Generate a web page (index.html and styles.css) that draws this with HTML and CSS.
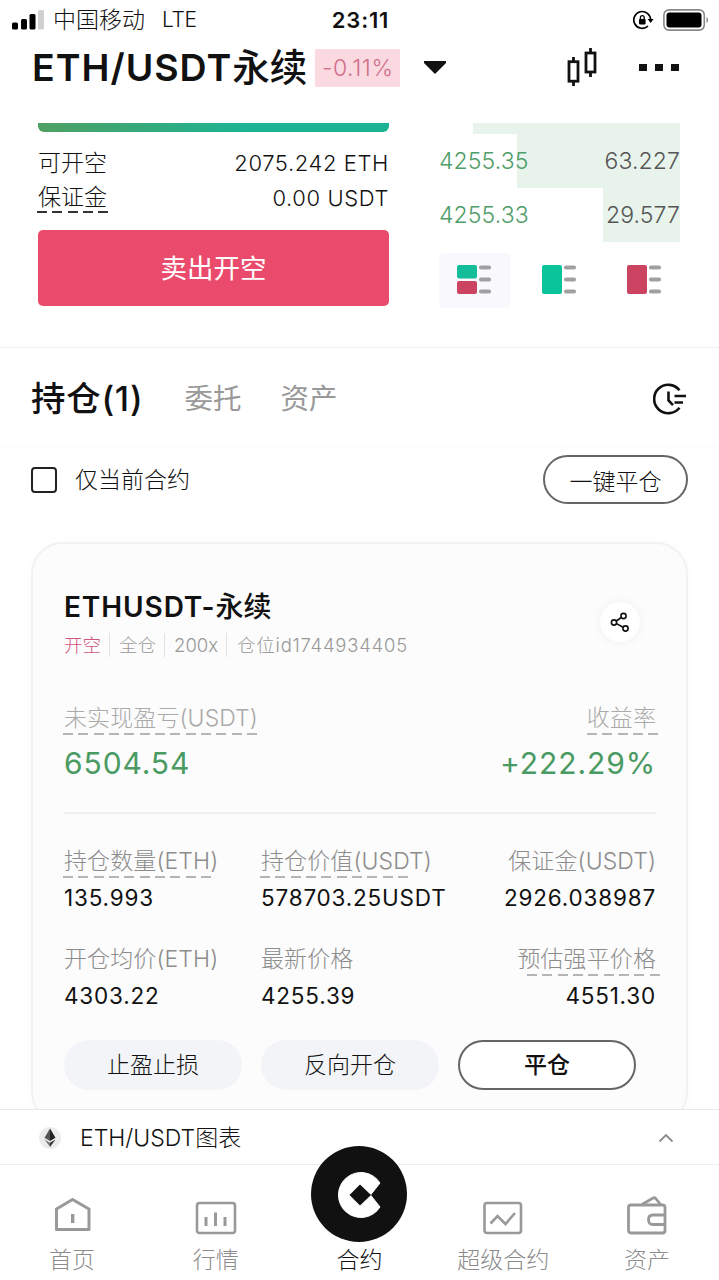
FILE: index.html
```html
<!DOCTYPE html>
<html lang="zh-CN">
<head>
    <meta charset="UTF-8">
    <meta name="viewport" content="width=device-width, initial-scale=1.0">
    <title>ETH/USDT永续</title>
    <link rel="stylesheet" href="styles.css">
</head>
<body>

    <div class="statusbar">
        <div class="carrier">
            <svg class="signal" width="32" height="20" viewBox="0 0 32 20">
                <rect x="0" y="12.5" width="6" height="7" rx="1.5" fill="#000"/>
                <rect x="9" y="9" width="6" height="10.5" rx="1.5" fill="#000"/>
                <rect x="17.5" y="4" width="6" height="15.5" rx="1.5" fill="#000"/>
                <rect x="26" y="0" width="6" height="19.5" rx="1.5" fill="#d0d0d0"/>
            </svg>
            <span class="operator">中国移动</span>
            <span class="network">LTE</span>
        </div>
        <span class="time">23:11</span>
        <div class="battery">
            <svg width="22" height="20" viewBox="0 0 22 20" fill="none">
                <path d="M17.6 10a8.4 8.4 0 1 0-2.6 6" stroke="#000" stroke-width="1.7"/>
                <path d="M14.6 9h6l-3 4z" fill="#000"/>
                <rect x="6" y="9" width="6.6" height="5.4" rx=".8" fill="#000"/>
                <path d="M7.4 9.5V7.6a1.9 1.9 0 0 1 3.8 0V9.5" stroke="#000" stroke-width="1.3"/>
            </svg>
            <svg width="46" height="22" viewBox="0 0 46 22" fill="none">
                <rect x=".9" y=".9" width="40.4" height="20.2" rx="5" stroke="#8a8a8a" stroke-width="1.6"/>
                <rect x="3.5" y="3.5" width="35" height="15" rx="3" fill="#000"/>
                <path d="M43.500 8v6c2-1 2-5 0-6z" fill="#888"/>
            </svg>
        </div>
    </div>

    <header class="topbar">
        <h1>ETH/USDT<span>永续</span></h1>
        <span class="change">-0.11%</span>
        <svg class="caret" width="24" height="15" viewBox="0 0 24 15"><path d="M1 1h22v2L12 14 1 3z" fill="#111"/></svg>
        <svg class="candles" width="32" height="40" viewBox="0 0 32 40" fill="none" stroke="#111" stroke-width="2.8">
            <path d="M6.500 9v5M6.500 33v5M23.500 0v5M23.500 24v5"/>
            <rect x="2" y="13.700" width="9" height="19.500"/>
            <rect x="19" y="5" width="9" height="19"/>
        </svg>
        <div class="more"><i></i><i></i><i></i></div>
    </header>

    <main>
        <section class="trade">
            <div class="order">
                <div class="buy-edge"></div>
                <div class="order-row">
                    <span>可开空</span>
                    <span class="amount">2075.242 ETH</span>
                </div>
                <div class="order-row margin-row">
                    <span class="dashed d5">保证金</span>
                    <span class="amount">0.00 USDT</span>
                </div>
                <button class="sell">卖出开空</button>
            </div>
            <div class="book">
                <div class="depth-edge"></div>
                <div class="book-row depth-68"><span class="price">4255.35</span><span>63.227</span></div>
                <div class="book-row depth-32"><span class="price">4255.33</span><span>29.577</span></div>
                <div class="book-modes">
                    <div class="mode active">
                        <svg width="36" height="32" viewBox="0 0 36 32">
                            <rect x="1" y="1" width="20" height="13.5" rx="2" fill="#13bd9a"/>
                            <rect x="1" y="17" width="20" height="13" rx="2" fill="#cb4360"/>
                            <path d="M25 3.500h8M25 15.500h8M25 27.500h8" stroke="#a0a0a0" stroke-width="4.2" stroke-linecap="round"/>
                        </svg>
                    </div>
                    <div class="mode">
                        <svg width="36" height="32" viewBox="0 0 36 32">
                            <rect x="1" y="1" width="20" height="29" rx="2" fill="#0ac49c"/>
                            <path d="M25 3.500h8M25 15.500h8M25 27.500h8" stroke="#a0a0a0" stroke-width="4.2" stroke-linecap="round"/>
                        </svg>
                    </div>
                    <div class="mode">
                        <svg width="36" height="32" viewBox="0 0 36 32">
                            <rect x="1" y="1" width="20" height="29" rx="2" fill="#cb4360"/>
                            <path d="M25 3.500h8M25 15.500h8M25 27.500h8" stroke="#a0a0a0" stroke-width="4.2" stroke-linecap="round"/>
                        </svg>
                    </div>
                </div>
            </div>
        </section>

        <nav class="tabs">
            <span class="tab current">持仓(1)</span>
            <span class="tab">委托</span>
            <span class="tab">资产</span>
            <svg class="history" width="34" height="32" viewBox="0 0 34 32" fill="none" stroke="#111" stroke-width="2.6">
                <path d="M26.500 7.200A14.200 14.200 0 1 0 26.500 24.800"/>
                <path d="M15.500 8.500v9l4.500 4.700M21.500 13H33M21.500 19.500h8.500"/>
            </svg>
        </nav>

        <div class="filter">
            <span class="checkbox"></span>
            <span class="filter-label">仅当前合约</span>
            <button class="close-all">一键平仓</button>
        </div>

        <section class="card">
            <div class="card-head">
                <div>
                    <h2>ETHUSDT-<span>永续</span></h2>
                    <div class="tags">
                        <span class="short">开空</span>
                        <span>全仓</span>
                        <span>200x</span>
                        <span class="pos-id">仓位id1744934405</span>
                    </div>
                </div>
                <div class="share">
                    <svg width="20" height="22" viewBox="0 0 20 22" fill="none" stroke="#111" stroke-width="1.6">
                        <circle cx="4" cy="11.5" r="2.6"/>
                        <circle cx="13.5" cy="5" r="2.6"/>
                        <circle cx="15.5" cy="17.5" r="2.6"/>
                        <path d="M6.300 10l5-3.500M6.500 12.600l6.600 3.700"/>
                    </svg>
                </div>
            </div>

            <div class="pnl">
                <div class="stat">
                    <span class="label dashed d13">未实现盈亏(USDT)</span>
                    <span class="big">6504.54</span>
                </div>
                <div class="stat right">
                    <span class="label dashed d5">收益率</span>
                    <span class="big rate">+222.29%</span>
                </div>
            </div>

            <div class="stats">
                <div class="stat">
                    <span class="label dashed d10">持仓数量(ETH)</span>
                    <span class="value">135.993</span>
                </div>
                <div class="stat">
                    <span class="label dashed d10">持仓价值(USDT)</span>
                    <span class="value">578703.25USDT</span>
                </div>
                <div class="stat right">
                    <span class="label">保证金(USDT)</span>
                    <span class="value">2926.038987</span>
                </div>
                <div class="stat">
                    <span class="label">开仓均价(ETH)</span>
                    <span class="value">4303.22</span>
                </div>
                <div class="stat">
                    <span class="label">最新价格</span>
                    <span class="value">4255.39</span>
                </div>
                <div class="stat right">
                    <span class="label dashed d9">预估强平价格</span>
                    <span class="value">4551.30</span>
                </div>
            </div>

            <div class="actions">
                <button>止盈止损</button>
                <button>反向开仓</button>
                <button class="outline">平仓</button>
            </div>
        </section>
    </main>

    <div class="chartbar">
        <svg class="coin" width="24" height="24" viewBox="0 0 24 24">
            <circle cx="12" cy="12" r="11" fill="#ececec"/>
            <path d="M12 2.500l-5.500 9.200L12 15z" fill="#555"/>
            <path d="M12 2.500l5.500 9.200L12 15z" fill="#222"/>
            <path d="M6.500 13.500L12 21v-4.300z" fill="#777"/>
            <path d="M17.500 13.500L12 21v-4.300z" fill="#333"/>
        </svg>
        <span>ETH/USDT图表</span>
        <svg class="chevron" width="16" height="10" viewBox="0 0 16 10" fill="none" stroke="#8c8c8c" stroke-width="1.8"><path d="M1.500 8.500L8 2l6.500 6.500"/></svg>
    </div>

    <footer class="tabbar">
        <div class="item">
            <svg width="40" height="40" viewBox="0 0 40 40" fill="none" stroke="#999" stroke-width="3">
                <path d="M4.500 34.500V14L20.500 4.500 37 14v20.500z" stroke-linejoin="round"/>
                <path d="M20.700 19v9" stroke-width="3.4"/>
            </svg>
            <span>首页</span>
        </div>
        <div class="item">
            <svg width="42" height="40" viewBox="0 0 42 40" fill="none" stroke="#999" stroke-width="2.6">
                <rect x="2" y="8" width="38" height="30" rx="2.5"/>
                <path d="M11 22v9M20.500 17.500V31M30 22v9" stroke-width="3"/>
            </svg>
            <span>行情</span>
        </div>
        <div class="item selected">
            <div class="logo">
                <svg width="96" height="96" viewBox="0 0 96 96">
                    <circle cx="48" cy="48" r="48" fill="#111"/>
                    <path d="M69 37A22.500 22.500 0 1 0 69 61L59.500 49z" fill="#fff" stroke="#fff" stroke-linejoin="round"/>
                    <path d="M49 38.500L60 49 49 59.500 38.500 49z" fill="#111"/>
                </svg>
            </div>
            <span>合约</span>
        </div>
        <div class="item">
            <svg width="42" height="40" viewBox="0 0 42 40" fill="none" stroke="#999" stroke-width="2.6">
                <rect x="2.5" y="8" width="36.5" height="30" rx="2.5"/>
                <path d="M8.500 28.500l7-7.500 8 8L33 18"/>
            </svg>
            <span>超级合约</span>
        </div>
        <div class="item">
            <svg width="42" height="40" viewBox="0 0 42 40" fill="none" stroke="#999" stroke-width="2.8">
                <rect x="2.5" y="10" width="36.5" height="28" rx="2.5"/>
                <path d="M16 9.500l11-6.500q2-.8 3.200 1L34.500 9.500"/>
                <path d="M39 20H27q-4.500 0-4.500 4.700t4.500 4.800h12"/>
            </svg>
            <span>资产</span>
        </div>
    </footer>

</body>
</html>
```

FILE: styles.css
```css
* {
    box-sizing: border-box;
}

body {
    margin: 0;
    height: 1280px;
    display: flex;
    flex-direction: column;
    overflow: hidden;
    background-color: #fff;
    color: #111;
    font-family: Inter, "Noto Sans CJK SC", sans-serif;
    font-size: 23px;
    line-height: 30px;
    font-weight: 300;
}

h1, h2 {
    margin: 0;
    font-weight: 600;
    white-space: nowrap;
}

h1 span, h2 span {
    font-weight: 500;
    letter-spacing: 0;
}

button {
    border: none;
    padding: 0;
    font: inherit;
    color: inherit;
}

svg {
    display: block;
    flex: none;
}

/* status bar */
.statusbar {
    height: 38px;
    padding: 2px 10px 0 12px;
    display: grid;
    grid-template-columns: 1fr auto 1fr;
    align-items: center;
    font-weight: 400;
}

.carrier {
    display: flex;
    align-items: center;
}

.signal {
    margin-right: 9px;
}

.network {
    margin-left: 17px;
    font-size: 21px;
    font-weight: 300;
    letter-spacing: -0.3px;
}

.operator {
    font-weight: 300;
}

.time {
    font-size: 22px;
    font-weight: 600;
    letter-spacing: 0.8px;
}

.battery {
    display: flex;
    justify-content: flex-end;
    align-items: center;
    gap: 8px;
}

/* header */
.topbar {
    height: 85px;
    padding: 0 40px 26px 32px;
    display: flex;
    align-items: center;
}

h1 {
    font-size: 37.5px;
    line-height: 44px;
    letter-spacing: 1px;
}

.change {
    width: 85px;
    height: 38px;
    margin-left: 8px;
    line-height: 38px;
    text-align: center;
    letter-spacing: 0.6px;
    background-color: #fad9e0;
    color: #d0708a;
}

.caret {
    margin-left: 23px;
}

.candles {
    margin-left: auto;
}

.more {
    display: flex;
    gap: 8px;
    margin-left: 40px;
}

.more i {
    width: 8px;
    height: 7px;
    background-color: #111;
}

/* order form + order book */
.trade {
    height: 225px;
    padding: 0 38px;
    display: flex;
    justify-content: space-between;
    border-bottom: 1px solid #f0f0f0;
}

.order {
    width: 351px;
}

.buy-edge {
    height: 9px;
    margin-bottom: 16px;
    border-radius: 0 0 6px 6px;
    background: linear-gradient(to right, #4fa063, #1cb394 60%);
}

.order-row {
    display: flex;
    justify-content: space-between;
    height: 34px;
}

.margin-row {
    height: 48px;
}

.amount {
    font-size: 22px;
    letter-spacing: 0.6px;
}

.margin-row .amount {
    padding-top: 1px;
}

.sell {
    display: block;
    width: 100%;
    height: 76px;
    border-radius: 5px;
    background-color: #ea4b6d;
    color: #fff;
    font-size: 26.5px;
    font-weight: 400;
}

.book {
    width: 242px;
    padding-right: 1px;
}

.depth-edge {
    height: 11px;
    margin-left: 34px;
    background-color: #e8f3eb;
}

.book-row {
    height: 54px;
    display: flex;
    justify-content: space-between;
    line-height: 54px;
    letter-spacing: 0.1px;
    color: #555;
    background: linear-gradient(#e8f3eb, #e8f3eb) right / 0 100% no-repeat;
}

.depth-68 {
    background-size: 163px 100%;
}

.depth-32 {
    background-size: 77px 100%;
}

.price {
    color: #4f9d68;
}

.book-modes {
    display: flex;
    gap: 14px;
    margin-top: 11px;
}

.mode {
    width: 71px;
    height: 55px;
    padding: 11px 0 0 17px;
    flex: none;
    border-radius: 4px;
}

.mode.active {
    background-color: #f9f9fd;
}

/* tabs */
.tabs {
    height: 99px;
    padding: 3px 32px 0 31px;
    display: flex;
    align-items: center;
    border-bottom: 1px solid #fafafa;
}

.tab {
    margin-right: 39px;
    font-size: 28.5px;
    font-weight: 400;
    color: #999;
}

.tab.current {
    margin-right: 41px;
    font-size: 34.5px;
    font-weight: 500;
    letter-spacing: 0.7px;
    color: #111;
}

.history {
    margin-left: auto;
}

.filter {
    height: 95px;
    padding: 8px 31px 38px;
    display: flex;
    align-items: center;
}

.checkbox {
    width: 26px;
    height: 26px;
    margin-right: 18px;
    border: 2px solid #222;
    border-radius: 4px;
}

.close-all {
    width: 145px;
    height: 49px;
    margin-left: auto;
    padding-top: 4px;
    border: 2px solid #666;
    border-radius: 25px;
    background: none;
}

/* position card */
.card {
    width: 657px;
    height: 582px;
    margin: 0 auto;
    padding: 47px 30px 0 31px;
    border: 2px solid #f2f2f2;
    border-radius: 32px;
    background-color: #fcfcfc;
    box-shadow: 0 0 14px rgba(0, 0, 0, 0.02);
}

.card-head {
    height: 112px;
    display: flex;
    justify-content: space-between;
}

h2 {
    font-size: 28px;
    line-height: 32px;
    letter-spacing: 0.9px;
}

.tags {
    display: flex;
    margin-top: 10px;
    font-size: 18.5px;
    line-height: 24px;
    color: #999;
}

.tags span + span {
    margin-left: 8px;
    padding-left: 9px;
    border-left: 1px solid #e2e2e2;
}

.tags .short {
    color: #d0567c;
}

.tags .pos-id {
    padding-left: 10px;
    letter-spacing: 0.75px;
}

.share {
    width: 40px;
    height: 40px;
    margin: 11px 16px 0 0;
    display: flex;
    align-items: center;
    justify-content: center;
    border-radius: 50%;
    background-color: #fff;
    box-shadow: 0 0 10px rgba(0, 0, 0, 0.06);
}

.pnl {
    height: 111px;
    display: flex;
    justify-content: space-between;
    border-bottom: 2px solid #f0f0f0;
}

.stat {
    display: flex;
    flex-direction: column;
}

.stat.right {
    align-items: flex-end;
}

.label {
    height: 37px;
    color: #8c8c8c;
    letter-spacing: 0.1px;
    white-space: nowrap;
}

.pnl .label {
    height: 45px;
    color: #aaa;
}

.big {
    font-size: 30px;
    font-weight: 400;
    letter-spacing: 0.9px;
    color: #4a9a63;
}

.value {
    font-size: 22.5px;
    font-weight: 400;
    letter-spacing: 0.8px;
}

/* dashed underline, sized by number of dashes */
.dashed::after {
    content: "";
    display: block;
    height: 2px;
    margin-left: -1px;
    background: repeating-linear-gradient(to right, #b5b5b5 0 10px, transparent 10px 15.33px);
}

.order .dashed::after {
    margin-top: -1px;
    background: repeating-linear-gradient(to right, #333 0 10px, transparent 10px 15.33px);
}

.d5::after {
    width: 71px;
}

.d9::after {
    width: 133px;
}

.d10::after {
    width: 148px;
}

.d13::after {
    width: 194px;
}

.right .d5::after {
    margin: 0 -3px 0 0;
}

.right .d9::after {
    margin: 0 -5px 0 10px;
}

.stats {
    display: grid;
    grid-template-columns: 197px 197px 1fr;
    grid-auto-rows: 98px;
    height: 226px;
    padding-top: 32px;
}

.actions {
    display: flex;
    gap: 19px;
    font-weight: 400;
}

.actions button {
    width: 178px;
    height: 50px;
    border-radius: 25px;
    background-color: #f2f4f7;
    font-weight: 300;
}

.actions .outline {
    border: 2px solid #666;
    background-color: #fff;
    font-weight: 500;
}

main {
    height: 986px;
    flex: none;
    overflow: hidden;
}

/* bottom bars */
.chartbar {
    height: 56px;
    flex: none;
    padding: 2px 45px 0 38px;
    display: flex;
    align-items: center;
    border-top: 1px solid #e8e8e8;
    border-bottom: 1px solid #ececec;
    background-color: #fff;
}

.coin {
    margin-right: 18px;
}

.chevron {
    margin-left: auto;
}

.tabbar {
    display: flex;
    height: 115px;
    flex: none;
}

.item {
    flex: 1;
    display: flex;
    flex-direction: column;
    align-items: center;
    padding-top: 30px;
    color: #8c8c8c;
}

.item span {
    margin-top: 10px;
}

.item.selected {
    padding-top: 0;
    color: #111;
}

.logo {
    margin-top: -19px;
}

.item.selected span {
    margin-top: 3px;
}
```
